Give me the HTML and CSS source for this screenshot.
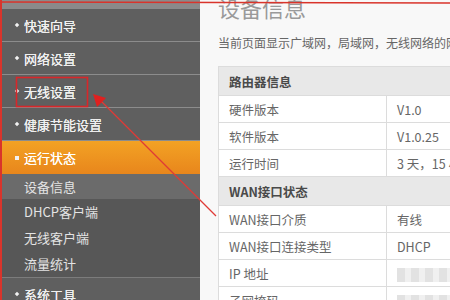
FILE: index.html
```html
<!DOCTYPE html>
<html>
<head>
    <meta charset="utf-8" />
    <title>设备信息</title>
    <link rel="stylesheet" href="styles.css">
</head>
<body>
    <div class="page">
        <div class="menu">
            <div class="menu-top"></div>
            <a class="item"><i></i>快速向导</a>
            <a class="item"><i></i>网络设置</a>
            <a class="item"><i></i>无线设置</a>
            <a class="item"><i></i>健康节能设置</a>
            <a class="item on"><i></i>运行状态</a>
            <div class="sub">
                <a class="cur">设备信息</a>
                <a>DHCP客户端</a>
                <a>无线客户端</a>
                <a>流量统计</a>
            </div>
            <a class="item"><i></i>系统工具</a>
        </div>
        <div class="main">
            <h1>设备信息</h1>
            <p class="tip">当前页面显示广域网，局域网，无线网络的网络状态信息</p>
            <table class="info">
                <tr class="head"><td colspan="2">路由器信息</td></tr>
                <tr><td>硬件版本</td><td>V1.0</td></tr>
                <tr><td>软件版本</td><td>V1.0.25</td></tr>
                <tr><td>运行时间</td><td>3 天，15 小时</td></tr>
                <tr class="head"><td colspan="2">WAN接口状态</td></tr>
                <tr><td>WAN接口介质</td><td>有线</td></tr>
                <tr><td>WAN接口连接类型</td><td>DHCP</td></tr>
                <tr><td>IP 地址</td><td><span class="blur"></span></td></tr>
                <tr><td>子网掩码</td><td><span class="blur"></span></td></tr>
            </table>
        </div>
    </div>
    <!-- 红色标注 -->
    <svg class="mark" width="450" height="300" viewBox="0 0 450 300">
        <line x1="0" y1="2" x2="450" y2="3" stroke="#d9342b" stroke-width="1.5" />
        <line x1="1" y1="0" x2="1" y2="300" stroke="#d9342b" stroke-width="2" />
        <rect x="16.5" y="77.5" width="71" height="29" fill="none" stroke="#d8272a" stroke-width="1.6" />
        <line x1="100" y1="100" x2="216" y2="216" stroke="#e03a36" stroke-width="1.3" />
        <polygon points="93,94 106,98 97,107" fill="#e0201f" />
    </svg>
</body>
</html>
```

FILE: styles.css
```css
* {
    padding: 0;
    margin: 0;
}

body {
    font-family: "Noto Sans CJK SC", "Liberation Sans", sans-serif;
    background: #fff;
    overflow: hidden;
}

.page {
    display: flex;
    width: 450px;
    height: 300px;
    overflow: hidden;
}

.menu {
    width: 200px;
    flex: none;
    background: #5f5f5f;
    display: flex;
    flex-direction: column;
}

    .menu > * {
        flex: none;
    }

    .menu-top {
        height: 9px;
        background: #8a8a8a;
    }

    .menu .item {
        display: flex;
        align-items: center;
        height: 32px;
        padding-left: 15px;
        border-bottom: 1px #8c8c8c solid;
        color: #f0f0f0;
        font-size: 13px;
        text-shadow: 0 0 0.4px #fff;
    }

        .menu .item i {
            width: 4px;
            height: 4px;
            background: #f2f2f2;
            margin-right: 5px;
            transform: rotate(45deg) scale(0.8);
        }

    .menu .on {
        background: linear-gradient(#f3a224, #e8861c);
        border-bottom: none;
        height: 33px;
        color: #fff;
    }

        .menu .on i {
            transform: none;
        }

    .menu .sub {
        background: #575757;
        border-bottom: 1px #7c7c7c solid;
    }

        .menu .sub a {
            display: block;
            height: 26px;
            line-height: 26px;
            padding-left: 24px;
            color: #e4e4e4;
            font-size: 13px;
        }

        .menu .sub .cur {
            background: #6b6b6b;
            height: 25px;
            line-height: 25px;
        }

.main {
    flex: 1;
    min-width: 0;
    padding-left: 18px;
    background: #f8f8f8;
}

    .main h1 {
        font-size: 22px;
        font-weight: normal;
        color: #9a9a9a;
        line-height: 24px;
        margin-top: -5px;
        white-space: nowrap;
    }

    .main .tip {
        font-size: 12px;
        color: #666;
        line-height: 16px;
        margin-top: 16px;
        white-space: nowrap;
    }

.info {
    margin-top: 15px;
    width: 330px;
    border-collapse: collapse;
    font-size: 12.5px;
    color: #666;
    background: #fff;
}

    .info td {
        border: 1px #dcdcdc solid;
        height: 26px;
        padding: 0 0 0 10px;
        white-space: nowrap;
    }

        .info td:first-child {
            width: 157px;
        }

    .info .head td {
        background: #e8e8e8;
        color: #4a4a4a;
        font-weight: bold;
        height: 28px;
    }

.blur {
    display: inline-block;
    width: 70px;
    height: 14px;
    vertical-align: middle;
    background: repeating-linear-gradient(90deg, #e2e2e2 0 8px, #f0f0f0 8px 14px);
}

.mark {
    position: absolute;
    left: 0;
    top: 0;
    pointer-events: none;
}
```
